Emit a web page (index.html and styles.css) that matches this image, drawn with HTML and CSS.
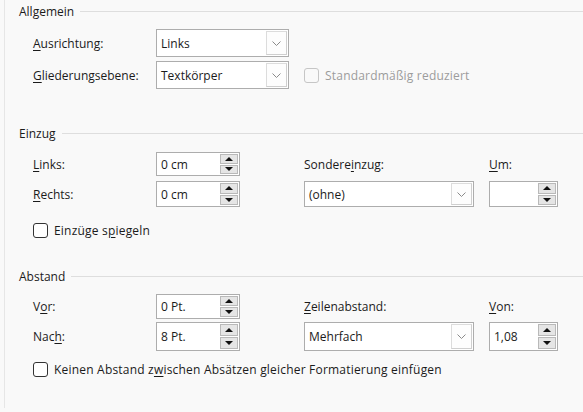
FILE: index.html
```html
<!DOCTYPE html>
<html lang="de">
<head>
  <meta charset="UTF-8" />
  <title>Absatz</title>
  <link rel="stylesheet" href="styles.css">
</head>
<body>
  <div class="dialog">

    <section class="group">
      <div class="group-title">Allgemein</div>
      <div class="grid grid-general">
        <label class="field-label"><u>A</u>usrichtung:</label>
        <div class="select">
          <span class="select-value">Links</span>
          <span class="select-btn"><svg width="9" height="5" viewBox="0 0 9 5"><polyline points="0.5,0.5 4.5,4.5 8.5,0.5" fill="none" stroke="#8a8a8a" stroke-width="1"/></svg></span>
        </div>
        <div></div>

        <label class="field-label"><u>G</u>liederungsebene:</label>
        <div class="select">
          <span class="select-value">Textkörper</span>
          <span class="select-btn"><svg width="9" height="5" viewBox="0 0 9 5"><polyline points="0.5,0.5 4.5,4.5 8.5,0.5" fill="none" stroke="#8a8a8a" stroke-width="1"/></svg></span>
        </div>
        <label class="check disabled"><span class="check-box"></span><span>Standardmäßig reduziert</span></label>
      </div>
    </section>

    <section class="group group-indent">
      <div class="group-title">Einzug</div>
      <div class="grid grid-wide grid-indent">
        <label class="field-label"><u>L</u>inks:</label>
        <div class="spin">
          <span class="spin-value">0 cm</span>
          <span class="spin-btns"><span class="spin-up"></span><span class="spin-down"></span></span>
        </div>
        <div></div>
        <label class="field-label">Sondere<u>i</u>nzug:</label>
        <label class="field-label"><u>U</u>m:</label>

        <label class="field-label"><u>R</u>echts:</label>
        <div class="spin">
          <span class="spin-value">0 cm</span>
          <span class="spin-btns"><span class="spin-up"></span><span class="spin-down"></span></span>
        </div>
        <div></div>
        <div class="select">
          <span class="select-value">(ohne)</span>
          <span class="select-btn"><svg width="9" height="5" viewBox="0 0 9 5"><polyline points="0.5,0.5 4.5,4.5 8.5,0.5" fill="none" stroke="#8a8a8a" stroke-width="1"/></svg></span>
        </div>
        <div class="spin">
          <span class="spin-value"></span>
          <span class="spin-btns"><span class="spin-up"></span><span class="spin-down"></span></span>
        </div>

        <label class="check span-all"><span class="check-box"></span><span>Einzüge s<u>p</u>iegeln</span></label>
      </div>
    </section>

    <section class="group group-spacing">
      <div class="group-title">Abstand</div>
      <div class="grid grid-wide grid-spacing">
        <label class="field-label">V<u>o</u>r:</label>
        <div class="spin">
          <span class="spin-value">0 Pt.</span>
          <span class="spin-btns"><span class="spin-up"></span><span class="spin-down"></span></span>
        </div>
        <div></div>
        <label class="field-label"><u>Z</u>eilenabstand:</label>
        <label class="field-label"><u>V</u>on:</label>

        <label class="field-label">Nac<u>h</u>:</label>
        <div class="spin">
          <span class="spin-value">8 Pt.</span>
          <span class="spin-btns"><span class="spin-up"></span><span class="spin-down"></span></span>
        </div>
        <div></div>
        <div class="select">
          <span class="select-value">Mehrfach</span>
          <span class="select-btn"><svg width="9" height="5" viewBox="0 0 9 5"><polyline points="0.5,0.5 4.5,4.5 8.5,0.5" fill="none" stroke="#8a8a8a" stroke-width="1"/></svg></span>
        </div>
        <div class="spin">
          <span class="spin-value">1,08</span>
          <span class="spin-btns"><span class="spin-up"></span><span class="spin-down"></span></span>
        </div>

        <label class="check span-all"><span class="check-box"></span><span>Keinen Abstand z<u>w</u>ischen Absätzen gleicher Formatierung einfügen</span></label>
      </div>
    </section>

  </div>
</body>
</html>
```

FILE: styles.css
```css
body {
  margin: 0;
  background: #f9f9f9;
  font-family: 'Open Sans', 'Noto Sans', sans-serif;
  font-size: 12px;
  color: #1b1b1b;
}

.dialog {
  margin-left: 4px;
  border-left: 1px solid #e6e6e6;
  padding: 4px 0 0 14px;
  min-height: 408px;
  box-sizing: border-box;
}

.group-title {
  display: flex;
  align-items: center;
  gap: 6px;
  height: 16px;
  line-height: 16px;
}

.group-title::after {
  content: "";
  flex: 1;
  height: 1px;
  margin-top: -2px;
  background: #dedede;
}

.grid {
  display: grid;
  align-items: center;
  padding-left: 14px;
  margin-top: 9px;
}

.grid-general {
  grid-template-columns: 123px 133px auto;
  grid-template-rows: 28px 28px;
  row-gap: 4px;
}

.grid-general .check {
  margin-left: 15px;
}

.grid-wide {
  grid-template-columns: 123px 84px 64px 170px 84px;
}

.grid-wide > :nth-child(5n) {
  margin-left: 15px;
}

.grid-wide > .span-all {
  grid-column: 1 / -1;
  margin-left: 0;
  height: 16px;
}

.group-indent {
  margin-top: 37px;
}

.grid-indent {
  margin-top: 10px;
  grid-template-rows: 24px 26px auto;
  row-gap: 5px;
}

.grid-indent > .span-all {
  margin-top: 10px;
}

.group-spacing {
  margin-top: 31px;
}

.grid-spacing {
  grid-template-rows: 25px 29px auto;
  row-gap: 3px;
}

.grid-spacing > .span-all {
  margin-top: 7px;
}

.field-label {
  white-space: nowrap;
}

.field-label u,
.check u {
  text-decoration-thickness: 1px;
  text-underline-offset: 2px;
}

.select,
.spin {
  display: flex;
  align-items: center;
  height: 100%;
  background: #fff;
  border: 1px solid #adadad;
  box-sizing: border-box;
}

.select-value,
.spin-value {
  flex: 1;
  padding-left: 4px;
  white-space: nowrap;
}

.select-btn {
  display: flex;
  align-items: center;
  justify-content: center;
  width: 19px;
  align-self: stretch;
  margin: 1px 1px 1px 0;
  border: 1px solid #dcdcdc;
  border-right-color: #cfcfcf;
  border-bottom-color: #cfcfcf;
  background: #fdfdfd;
}

.spin-btns {
  display: flex;
  flex-direction: column;
  width: 18px;
  align-self: stretch;
  margin: 1px;
  gap: 1px;
}

.spin-up,
.spin-down {
  flex: 1;
  position: relative;
  background: #e5e5e5;
  border: 1px solid #b9b9b9;
  box-sizing: border-box;
}

.spin-up::after,
.spin-down::after {
  content: "";
  position: absolute;
  left: 50%;
  top: 50%;
  margin-left: -4px;
  border-left: 4px solid transparent;
  border-right: 4px solid transparent;
}

.spin-up::after {
  margin-top: -2px;
  border-bottom: 4px solid #111;
}

.spin-down::after {
  margin-top: -2px;
  border-top: 4px solid #111;
}

.check {
  display: flex;
  align-items: center;
  gap: 6px;
  white-space: nowrap;
  letter-spacing: 0.2px;
}

.check-box {
  width: 13px;
  height: 13px;
  border: 1px solid #333;
  border-radius: 3px;
  background: #fff;
}

.check.disabled {
  color: #9c9c9c;
}

.check.disabled .check-box {
  border-color: #c6c6c6;
  background: #f9f9f9;
}
```
